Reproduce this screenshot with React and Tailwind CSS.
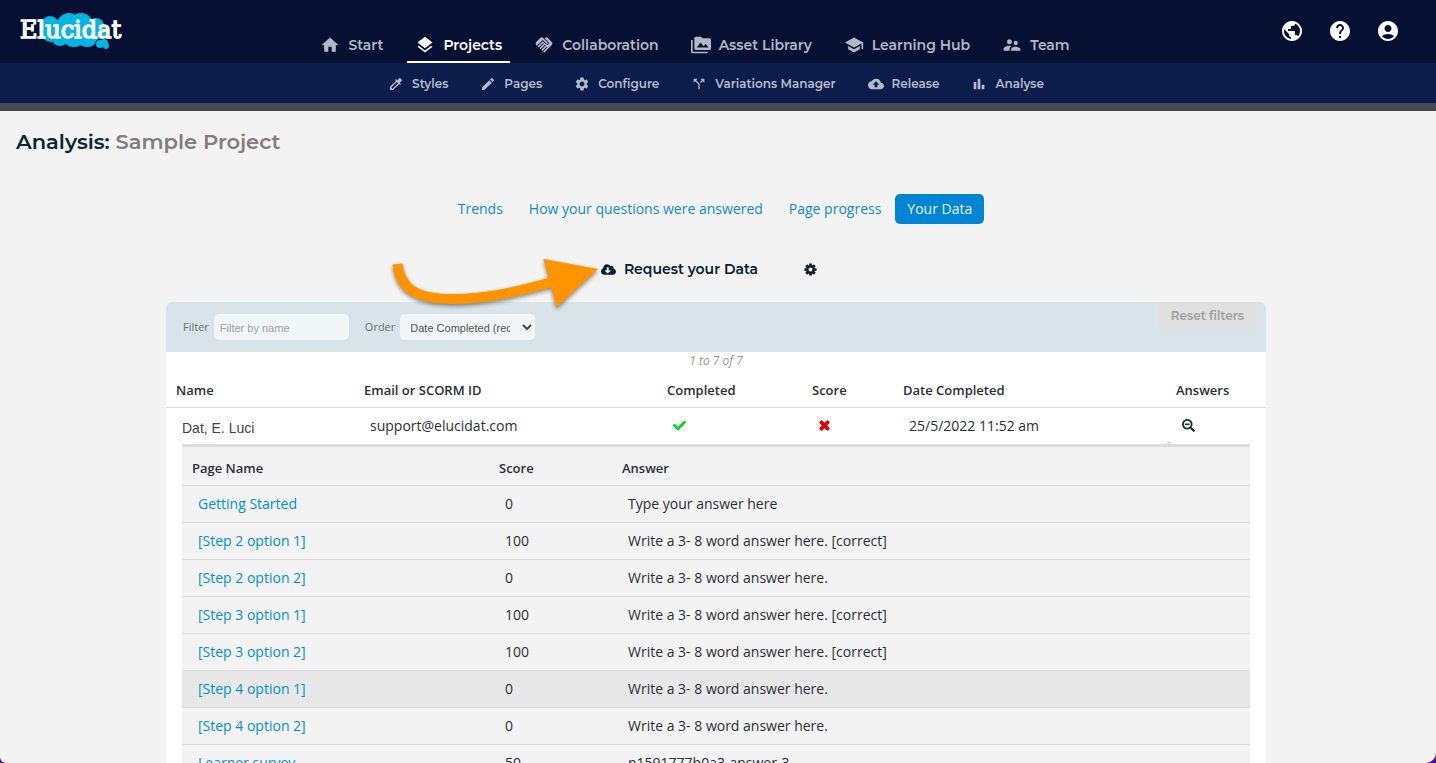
import { useState } from 'react';
import clsx from 'clsx';
import {
  MdAccountCircle, MdBackup, MdBarChart, MdCallSplit, MdColorize, MdEdit, MdHandshake, MdHelp, MdHome,
  MdLayers, MdPermMedia, MdPublic, MdSchool, MdSettings, MdSupervisorAccount,
} from 'react-icons/md';
import { FaCheck, FaCloudDownloadAlt, FaSearchMinus, FaTimes } from 'react-icons/fa';

const mainNav = [
  { label: 'Start', icon: MdHome },
  { label: 'Projects', icon: MdLayers, active: true },
  { label: 'Collaboration', icon: MdHandshake },
  { label: 'Asset Library', icon: MdPermMedia },
  { label: 'Learning Hub', icon: MdSchool },
  { label: 'Team', icon: MdSupervisorAccount },
];

const projectNav = [
  { label: 'Styles', icon: MdColorize },
  { label: 'Pages', icon: MdEdit },
  { label: 'Configure', icon: MdSettings },
  { label: 'Variations Manager', icon: MdCallSplit },
  { label: 'Release', icon: MdBackup },
  { label: 'Analyse', icon: MdBarChart },
];

const tabs = ['Trends', 'How your questions were answered', 'Page progress', 'Your Data'];

const answers = [
  { page: 'Getting Started', score: 0, answer: 'Type your answer here' },
  { page: '[Step 2 option 1]', score: 100, answer: 'Write a 3- 8 word answer here. [correct]' },
  { page: '[Step 2 option 2]', score: 0, answer: 'Write a 3- 8 word answer here.' },
  { page: '[Step 3 option 1]', score: 100, answer: 'Write a 3- 8 word answer here. [correct]' },
  { page: '[Step 3 option 2]', score: 100, answer: 'Write a 3- 8 word answer here. [correct]' },
  { page: '[Step 4 option 1]', score: 0, answer: 'Write a 3- 8 word answer here.', highlighted: true },
  { page: '[Step 4 option 2]', score: 0, answer: 'Write a 3- 8 word answer here.' },
  { page: 'Learner survey', score: 50, answer: 'n1591777b0a3-answer-3' },
];

function Logo() {
  return (
    <svg width="106" height="41" viewBox="0 0 106 41" role="img" aria-label="Elucidat">
      <g fill="#00b5e2">
        <circle cx="30" cy="16" r="9" />
        <circle cx="31" cy="23" r="10" />
        <circle cx="40" cy="29" r="8" />
        <circle cx="49" cy="16" r="12" />
        <circle cx="54" cy="26" r="12" />
        <circle cx="61" cy="16" r="12" />
        <circle cx="67" cy="26" r="12" />
        <circle cx="76" cy="17" r="8" />
        <circle cx="80" cy="22" r="8" />
      </g>
      {/* small trailing puff, cut out of the cloud by a dark rim */}
      <g fill="#051033">
        <circle cx="80" cy="35" r="5" />
        <circle cx="84" cy="34" r="5" />
      </g>
      <g fill="#00b5e2">
        <circle cx="80" cy="35" r="4" />
        <circle cx="84" cy="34" r="4" />
        <circle cx="86" cy="37" r="3" />
      </g>
      <text
        x="0"
        y="29"
        fill="#fff"
        stroke="#fff"
        strokeWidth="1.4"
        className="font-['DejaVu_Serif',serif] text-[24px] font-normal"
      >
        Elucidat
      </text>
    </svg>
  );
}

function Cog() {
  return (
    <svg width="13" height="13" viewBox="0 0 26 26" fill="none" stroke="currentColor" aria-hidden="true">
      <circle cx="13" cy="13" r="6.5" strokeWidth="5" />
      <g strokeWidth="5.5">
        <path d="M13 1v4M13 21v4M1 13h4M21 13h4" />
        <path d="M4.500 4.500l3 3M18.500 18.500l3 3M4.500 21.500l3-3M18.500 7.500l3-3" />
      </g>
    </svg>
  );
}

function Arrow() {
  return (
    <svg
      className="absolute -top-[5px] right-full pointer-events-none drop-shadow-[0_2px_2px_rgba(0,0,0,0.45)]"
      width="213"
      height="60"
      viewBox="388 254 213 60"
      aria-hidden="true"
    >
      <path
        d="M397.500 264C400 289 417 299 453 299C487 299 520 291 554 281.500"
        fill="none"
        stroke="#ff9300"
        strokeWidth="10"
      />
      <path d="M543.500 259L598 269L556.500 307.500Z" fill="#ff9300" />
    </svg>
  );
}

function Header() {
  return (
    <header className="font-[Montserrat,Inter,sans-serif] font-semibold">
      <div className="flex h-[63px] justify-between bg-[#051033] pl-5 pr-9">
        <a href="#home" className="pt-[9px]"><Logo /></a>
        <nav className="mr-4 flex items-end gap-4" aria-label="Main">
          {mainNav.map(({ label, icon: Icon, active }) => (
            <a
              key={label}
              href="#main"
              className={clsx(
                'flex h-9 items-center gap-2 border-b-2 px-2 pt-0.5 text-[14px]',
                active ? 'border-white text-white' : 'border-transparent text-[#b4b8c4]'
              )}
            >
              <Icon size={20} />
              {label}
            </a>
          ))}
        </nav>
        <div className="flex h-[62px] items-center gap-6 text-white">
          <button type="button" aria-label="Language"><MdPublic size={24} /></button>
          <button type="button" aria-label="Help"><MdHelp size={24} /></button>
          <button type="button" aria-label="Account"><MdAccountCircle size={24} /></button>
        </div>
      </div>
      <nav
        className="flex h-12 items-center justify-center gap-8 border-b-8 border-[#464a52] bg-[#0c1d4b] pt-px pr-1 text-[12px] text-[#b6bbc9]"
        aria-label="Project"
      >
        {projectNav.map(({ label, icon: Icon }) => (
          <a key={label} href="#project" className="flex items-center gap-2">
            <Icon size={16} />
            {label}
          </a>
        ))}
      </nav>
    </header>
  );
}

function FilterBar() {
  const [name, setName] = useState('');

  return (
    <div className="flex h-[50px] justify-between rounded-t-md bg-[#d9e3ea] pl-[17px] pr-[10px] text-[11px] text-[#6b7074]">
      <div className="flex items-center">
        <label htmlFor="filter-name" className="mr-[5px]">Filter</label>
        <input
          id="filter-name"
          type="text"
          value={name}
          onChange={(e) => setName(e.target.value)}
          placeholder="Filter by name"
          className="mr-4 h-[26px] w-[135px] rounded-[5px] bg-[#f1f6f7] px-1.5 pt-0.5 font-['Liberation_Sans',sans-serif] placeholder:text-[#9c9fa1]"
        />
        <label htmlFor="order" className="mr-[5px]">Order</label>
        <div className="relative">
          <select
            id="order"
            className="h-[26px] w-[135px] appearance-none rounded-[5px] bg-[#f1f6f7] pl-[10px] pr-[25px] pt-0.5 font-['Liberation_Sans',sans-serif] text-[#505356]"
          >
            <option>Date Completed (recent first)</option>
            <option>Date Completed (oldest first)</option>
            <option>Name</option>
          </select>
          <svg
            className="pointer-events-none absolute right-[3px] top-[10px]"
            width="10"
            height="7"
            viewBox="0 0 10 7"
            fill="none"
            stroke="#44474a"
            strokeWidth="2"
          >
            <path d="M1 1l4 4 4-4" />
          </svg>
        </div>
      </div>
      <button
        type="button"
        disabled
        className="h-7 rounded-b-[3px] bg-[#dfdfdf] px-3 font-[Montserrat,Inter,sans-serif] text-[12px] font-semibold text-[#9f9f9f]"
      >
        Reset filters
      </button>
    </div>
  );
}

function AnswerTable() {
  return (
    <table className="w-full table-fixed border-t-[3px] border-[#dcdcdc] bg-[#f3f3f3]">
      <colgroup>
        <col className="w-[307px]" />
        <col className="w-[123px]" />
        <col />
      </colgroup>
      <thead>
        <tr className="h-10 border-b border-[#dadada] text-left text-[13px]">
          <th className="px-[10px] pt-1.5 font-semibold">Page Name</th>
          <th className="px-[10px] pt-1.5 font-semibold">Score</th>
          <th className="px-[10px] pt-1.5 font-semibold">Answer</th>
        </tr>
      </thead>
      <tbody>
        {answers.map((row) => (
          <tr
            key={row.page}
            className={clsx('h-[37px] border-b border-[#dadada]', row.highlighted && 'bg-[#e8e8e8]')}
          >
            <td className="px-4 pb-0.5"><a href="#page" className="text-[#0091d0]">{row.page}</a></td>
            <td className="px-4 pb-0.5">{row.score}</td>
            <td className="px-4 pb-0.5">{row.answer}</td>
          </tr>
        ))}
      </tbody>
    </table>
  );
}

function DataTable() {
  return (
    <table className="w-full table-fixed text-[14px] text-[#2a2e36]">
      <colgroup>
        <col className="w-[188px]" />
        <col className="w-[303px]" />
        <col className="w-[145px]" />
        <col className="w-[91px]" />
        <col />
        <col className="w-[100px]" />
      </colgroup>
      <thead>
        <tr className="h-9 border-b border-[#dadada] text-left text-[13px]">
          {['Name', 'Email or SCORM ID', 'Completed', 'Score', 'Date Completed', 'Answers'].map((title) => (
            <th key={title} className="px-[10px] pt-1 font-semibold">{title}</th>
          ))}
        </tr>
      </thead>
      <tbody>
        <tr className="h-[37px]">
          <td className="px-4 pt-1.5 font-['Liberation_Sans',sans-serif] text-[#444]">Dat, E. Luci</td>
          <td className="px-4">support@elucidat.com</td>
          <td className="px-4"><FaCheck size={13} color="#00d515" aria-label="Yes" /></td>
          <td className="px-4">
            <FaTimes size={13} color="#e00000" strokeWidth="50" className="overflow-visible" aria-label="Failed" />
          </td>
          <td className="px-4">25/5/2022 11:52 am</td>
          <td className="relative px-4">
            <button type="button" aria-label="Hide answers" className="block"><FaSearchMinus size={13} /></button>
            <span className="absolute bottom-0 left-0 border-x-[3px] border-b-[3px] border-x-transparent border-b-[#dcdcdc]" />
          </td>
        </tr>
        <tr>
          <td colSpan={6} className="px-4"><AnswerTable /></td>
        </tr>
      </tbody>
    </table>
  );
}

export default function App() {
  const [tab, setTab] = useState('Your Data');

  return (
    <div className="h-screen bg-[#4a0aa8]">
      <div className="h-full overflow-hidden rounded-bl-[6px] rounded-br-[10px] bg-[#f3f3f3] font-['Open_Sans','Noto_Sans',sans-serif]">
        <Header />
        <main className="pr-1">
          <h1 className="px-4 pt-4 font-[Montserrat,Inter,sans-serif] text-[21px] leading-[30px] font-semibold text-[#0b2530]">
            Analysis: <span className="text-[#857a7c]">Sample Project</span>
          </h1>

          <div className="mt-[37px] flex justify-center gap-0.5 pr-0.5 text-[14px]">
            {tabs.map((name) => (
              <button
                key={name}
                type="button"
                onClick={() => setTab(name)}
                className={clsx(
                  'h-[30px] rounded-[5px] px-3 pb-0.5',
                  tab === name ? 'bg-[#0084d4] text-[#e6f5fc]' : 'text-[#0f8ad4]'
                )}
              >
                {name}
              </button>
            ))}
          </div>

          <div className="mt-[35px] flex h-5 items-center justify-center gap-[46px] pr-[14px] text-[#04202b]">
            <div className="relative">
              <Arrow />
              <button
                type="button"
                className="flex items-center gap-2 font-[Montserrat,Inter,sans-serif] text-[14px] leading-5 font-semibold"
              >
                <FaCloudDownloadAlt size={15} />
                Request your Data
              </button>
            </div>
            <button type="button" aria-label="Data settings"><Cog /></button>
          </div>

          <section className="mx-auto mt-[23px] max-w-[1100px] rounded-t-md bg-white">
            <FilterBar />
            <p className="pb-0.5 text-center text-[12px] leading-[17px] text-[#969696] italic">1 to 7 of 7</p>
            <DataTable />
          </section>
        </main>
      </div>
    </div>
  );
}
